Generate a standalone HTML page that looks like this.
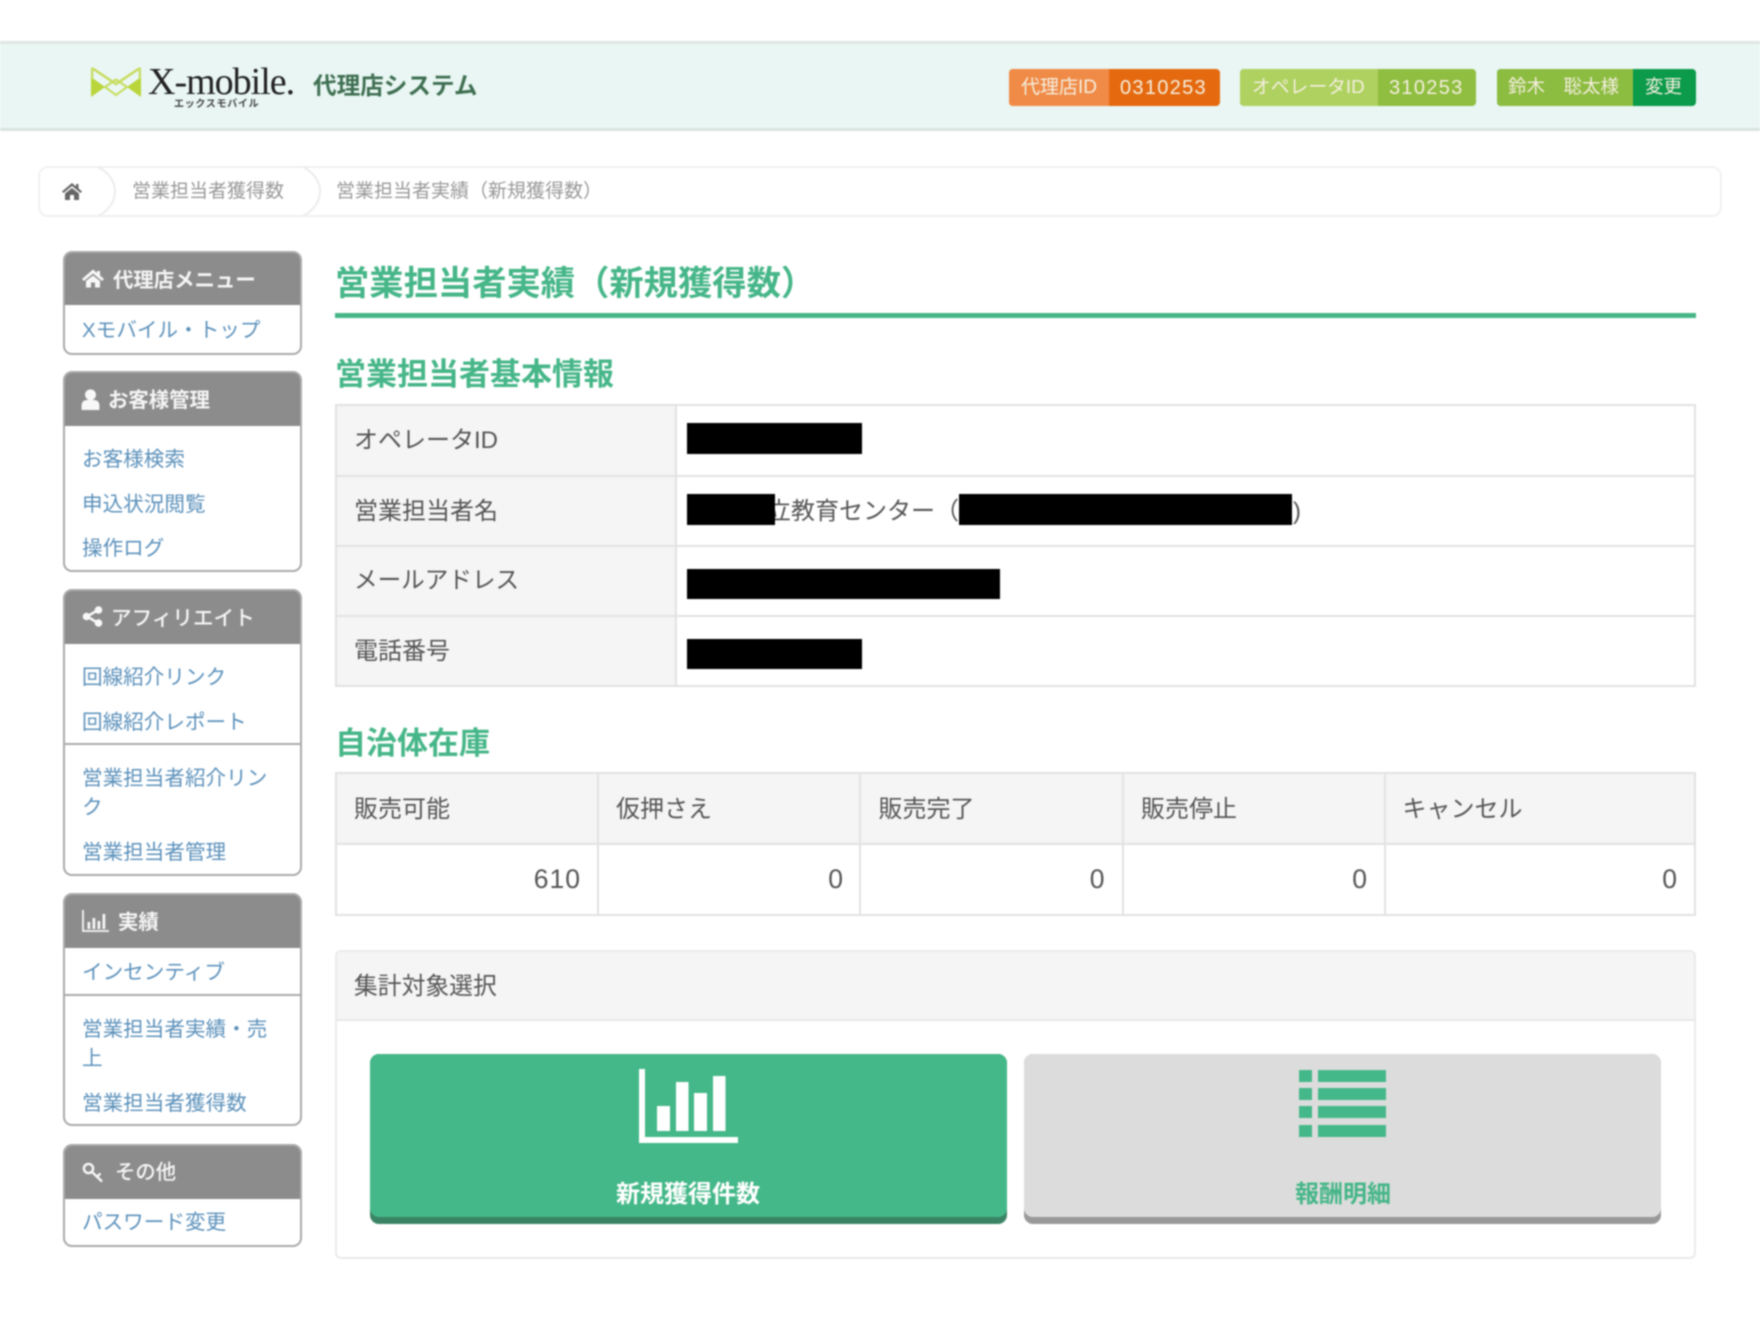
<!DOCTYPE html>
<html lang="ja"><head><meta charset="utf-8"><title>営業担当者実績（新規獲得数）</title>
<style>
html,body{margin:0;padding:0;background:#fff}
body{position:relative;width:1760px;height:1320px;overflow:hidden;font-family:"Liberation Sans","Noto Sans CJK JP",sans-serif;color:#555}
#w{position:absolute;left:0;top:0;width:1760px;height:1320px;filter:blur(.7px)}
.a{position:absolute;box-sizing:border-box}
.t{position:absolute;white-space:nowrap;line-height:1}
.box{position:absolute;left:63px;width:239px;box-sizing:border-box;border:2px solid #aaa;border-radius:9px;background:#fff;overflow:hidden}
.hd{position:absolute;left:-2px;top:-2px;width:239px;background:#8c8c8c}
.div{position:absolute;left:63px;width:239px;height:2px;background:#aaa}
.m{font-size:20.6px;color:#5c91bb;left:82px}
.mh{font-size:20.4px;color:#f5f5f5;font-weight:700}
.th{position:absolute;background:#f5f5f5}
.ln{position:absolute;background:#e2e2e2}
.c{font-size:24px;color:#555}
.n{font-size:26.500px;color:#555;letter-spacing:1px;text-align:right;font-family:"Liberation Sans",sans-serif}
.k{position:absolute;background:#000}
.g{color:#46b688;font-weight:700}
.bd{position:absolute;top:69px;height:37px;border-radius:4px}
.bt{font-size:19px;color:#f5efdf;top:78px}
</style></head><body><div id="w">

<!-- header -->
<div class="a" style="left:0;top:41px;width:1760px;height:90px;background:#e9f6f3;border-top:3px solid #dfe6e4;border-bottom:3px solid #dbe3e1"></div>
<svg class="a" style="left:91px;top:67px" width="50" height="30" viewBox="0 0 50 30">
<path d="M0 10L14 20L0 30Z" fill="#b9d53a"/><path d="M50 10L36 20L50 30Z" fill="#b9d53a"/>
<path d="M1 1L25 17L49 1M1 1V12M49 1V12" stroke="#c6dc5a" stroke-width="2.400" fill="none"/>
<path d="M14 20L25 12.500L36 20L25 28Z" stroke="#c6dc5a" stroke-width="2" fill="none"/>
</svg>
<div class="t" style="left:148px;top:63px;font:38px/1 'Liberation Serif',serif;letter-spacing:-1px;color:#222">X-mobile.</div>
<div class="t" style="left:174px;top:100px;font-size:10px;font-weight:700;color:#444;letter-spacing:.7px">エックスモバイル</div>
<div class="t" style="left:313px;top:76px;font-size:23.600px;font-weight:700;color:#3f6f52">代理店システム</div>

<div class="bd" style="left:1009px;width:211px;background:#e5690f"></div>
<div class="bd" style="left:1009px;width:100px;background:#f08b47;border-radius:4px 0 0 4px"></div>
<div class="t bt" style="left:1021px">代理店ID</div>
<div class="t bt" style="left:1120px;letter-spacing:1.300px;font-size:20px">0310253</div>
<div class="bd" style="left:1240px;width:236px;background:#8fbe40"></div>
<div class="bd" style="left:1240px;width:138px;background:#aed160;border-radius:4px 0 0 4px"></div>
<div class="t bt" style="left:1252px;font-size:18.800px">オペレータID</div>
<div class="t bt" style="left:1389px;letter-spacing:1.300px;font-size:20px">310253</div>
<div class="bd" style="left:1497px;width:199px;background:#0c9a4b"></div>
<div class="bd" style="left:1497px;width:136px;background:#8cbc40;border-radius:4px 0 0 4px"></div>
<div class="t bt" style="left:1508px;font-size:18.500px">鈴木　聡太様</div>
<div class="t bt" style="left:1645px;font-size:18.500px">変更</div>

<!-- breadcrumb -->
<div class="a" style="left:38px;top:166px;width:1684px;height:51px;border:2px solid #f1f1f1;border-radius:10px"></div>
<svg class="a" style="left:38px;top:166px" width="300" height="51" viewBox="0 0 300 51"><path d="M60 1C70 6 77 15 77 25.500C77 36 70 45 60 50" fill="none" stroke="#ececec" stroke-width="2"/><path d="M265 1C275 6 282 15 282 25.500C282 36 275 45 265 50" fill="none" stroke="#ececec" stroke-width="2"/></svg>
<svg class="a" style="left:61px;top:182px" width="22" height="18" viewBox="0 0 22 18"><path d="M11 1L1 9.500L2.500 11L11 4L19.500 11L21 9.500L17.500 6.500V2H15V4.500ZM4 11.500V18H9V13H13V18H18V11.500L11 6Z" fill="#666"/></svg>
<div class="t" style="left:132px;top:182px;font-size:19px;color:#999">営業担当者獲得数</div>
<div class="t" style="left:336px;top:182px;font-size:19px;color:#999">営業担当者実績（新規獲得数）</div>

<!-- sidebar -->
<div class="box" style="top:251px;height:104px"><div class="hd" style="height:54px"></div></div>
<div class="box" style="top:371px;height:201px"><div class="hd" style="height:55px"></div></div>
<div class="box" style="top:589px;height:287px"><div class="hd" style="height:55px"></div></div>
<div class="box" style="top:893px;height:233px"><div class="hd" style="height:55px"></div></div>
<div class="box" style="top:1144px;height:103px"><div class="hd" style="height:55px"></div></div>
<div class="div" style="top:743px"></div>
<div class="div" style="top:994px"></div>

<svg class="a" style="left:82px;top:269px" width="22" height="19" viewBox="0 0 22 18"><path d="M11 0L0 9.500L2 11.500L11 4L20 11.500L22 9.500L18 6V1.500H15V3.500ZM4 11.500V18H9V13H13V18H18V11.500L11 6Z" fill="#f8f8f8"/></svg>
<div class="t mh" style="left:113px;top:271px">代理店メニュー</div>
<div class="t m" style="top:321px">Xモバイル・トップ</div>

<svg class="a" style="left:81px;top:389px" width="19" height="21" viewBox="0 0 18 20"><circle cx="9" cy="5.500" r="5.200" fill="#f8f8f8"/><path d="M0.500 20V15Q1 10.500 6 10.500H12Q17 10.500 17.500 15V20Z" fill="#f8f8f8"/></svg>
<div class="t mh" style="left:108px;top:391px">お客様管理</div>
<div class="t m" style="top:450px">お客様検索</div>
<div class="t m" style="top:495px">申込状況閲覧</div>
<div class="t m" style="top:539px">操作ログ</div>

<svg class="a" style="left:82px;top:606px" width="21" height="21" viewBox="0 0 21 21"><path d="M16 4L5 10.500L16 17" stroke="#f8f8f8" stroke-width="2.500" fill="none"/><circle cx="16.500" cy="4" r="3.800" fill="#f8f8f8"/><circle cx="4.500" cy="10.500" r="3.800" fill="#f8f8f8"/><circle cx="16.500" cy="17" r="3.800" fill="#f8f8f8"/></svg>
<div class="t mh" style="left:111px;top:609px;font-weight:500;font-size:20.600px">アフィリエイト</div>
<div class="t m" style="top:668px">回線紹介リンク</div>
<div class="t m" style="top:712.500px">回線紹介レポート</div>
<div class="t m" style="top:769px">営業担当者紹介リン</div>
<div class="t m" style="top:798px">ク</div>
<div class="t m" style="top:843px">営業担当者管理</div>

<svg class="a" style="left:82px;top:910px" width="27" height="22" viewBox="0 0 27 22"><path d="M1 0V21H27" stroke="#f5f5f5" stroke-width="1.800" fill="none"/><path d="M5.500 12h2.800v7h-2.800zM10.500 8h2.800v11h-2.800zM15.500 11h2.800v8h-2.800zM20.500 4h2.800v15h-2.800z" fill="#f5f5f5"/></svg>
<div class="t mh" style="left:118px;top:913px">実績</div>
<div class="t m" style="top:963px">インセンティブ</div>
<div class="t m" style="top:1020px">営業担当者実績・売</div>
<div class="t m" style="top:1049px">上</div>
<div class="t m" style="top:1094px">営業担当者獲得数</div>

<svg class="a" style="left:82px;top:1160px" width="24" height="23" viewBox="0 0 24 23"><circle cx="6.500" cy="8.500" r="4.600" stroke="#f8f8f8" stroke-width="2.400" fill="none"/><path d="M10 12L20 21.500M15 16.500L18.500 13.500" stroke="#f8f8f8" stroke-width="2.400" fill="none"/></svg>
<div class="t mh" style="left:115px;top:1163px;font-weight:500">その他</div>
<div class="t m" style="top:1213px">パスワード変更</div>

<!-- main titles -->
<div class="t g" style="left:335px;top:266.500px;font-size:34.300px">営業担当者実績（新規獲得数）</div>
<div class="a" style="left:335px;top:313px;width:1361px;height:5px;background:#46b688"></div>
<div class="t g" style="left:335px;top:359px;font-size:31px">営業担当者基本情報</div>

<!-- table 1 -->
<div class="th" style="left:336px;top:405px;width:340px;height:282px"></div>
<div class="ln" style="left:335px;top:404px;width:1361px;height:2px"></div>
<div class="ln" style="left:335px;top:475px;width:1361px;height:2px"></div>
<div class="ln" style="left:335px;top:545px;width:1361px;height:2px"></div>
<div class="ln" style="left:335px;top:615px;width:1361px;height:2px"></div>
<div class="ln" style="left:335px;top:685px;width:1361px;height:2px"></div>
<div class="ln" style="left:335px;top:404px;width:2px;height:283px"></div>
<div class="ln" style="left:675px;top:404px;width:2px;height:283px"></div>
<div class="ln" style="left:1694px;top:404px;width:2px;height:283px"></div>
<div class="t c" style="left:354px;top:429px">オペレータID</div>
<div class="t c" style="left:354px;top:499.500px">営業担当者名</div>
<div class="t c" style="left:354px;top:569.500px;font-size:23.600px">メールアドレス</div>
<div class="t c" style="left:354px;top:640px">電話番号</div>
<div class="k" style="left:687px;top:423px;width:175px;height:31px"></div>
<div class="t c" style="left:767px;top:499.500px">立教育センター（</div>
<div class="k" style="left:687px;top:494px;width:88px;height:31px"></div>
<div class="k" style="left:958.500px;top:494px;width:333.500px;height:31px"></div>
<div class="t c" style="left:1293px;top:499.500px">)</div>
<div class="k" style="left:687px;top:569px;width:313px;height:30px"></div>
<div class="k" style="left:687px;top:639px;width:175px;height:30px"></div>

<div class="t g" style="left:335px;top:728px;font-size:31px">自治体在庫</div>

<!-- table 2 -->
<div class="th" style="left:336px;top:773px;width:1359px;height:71px"></div>
<div class="ln" style="left:335px;top:772px;width:1361px;height:2px"></div>
<div class="ln" style="left:335px;top:843px;width:1361px;height:2px"></div>
<div class="ln" style="left:335px;top:914px;width:1361px;height:2px"></div>
<div class="ln" style="left:335px;top:772px;width:2px;height:144px"></div>
<div class="ln" style="left:597px;top:772px;width:2px;height:144px"></div>
<div class="ln" style="left:859px;top:772px;width:2px;height:144px"></div>
<div class="ln" style="left:1122px;top:772px;width:2px;height:144px"></div>
<div class="ln" style="left:1384px;top:772px;width:2px;height:144px"></div>
<div class="ln" style="left:1694px;top:772px;width:2px;height:144px"></div>
<div class="t c" style="left:354px;top:797.500px">販売可能</div>
<div class="t c" style="left:616px;top:797.500px">仮押さえ</div>
<div class="t c" style="left:878.500px;top:797.500px">販売完了</div>
<div class="t c" style="left:1141px;top:797.500px">販売停止</div>
<div class="t c" style="left:1402.500px;top:797.500px">キャンセル</div>
<div class="t n" style="left:480px;width:101px;top:865.500px">610</div>
<div class="t n" style="left:740px;width:104px;top:865.500px">0</div>
<div class="t n" style="left:1000px;width:105.500px;top:865.500px">0</div>
<div class="t n" style="left:1260px;width:108px;top:865.500px">0</div>
<div class="t n" style="left:1570px;width:108px;top:865.500px">0</div>

<!-- panel -->
<div class="a" style="left:335px;top:950px;width:1361px;height:309px;border:2px solid #ebebeb;border-radius:6px"></div>
<div class="a" style="left:337px;top:952px;width:1357px;height:69px;background:#f5f5f5;border-bottom:2px solid #e8e8e8;border-radius:4px 4px 0 0"></div>
<div class="t" style="left:354px;top:975px;font-size:23.800px;color:#555">集計対象選択</div>

<div class="a" style="left:370px;top:1054px;width:637px;height:170px;background:#3a8465;border-radius:9px"></div>
<div class="a" style="left:370px;top:1054px;width:637px;height:163px;background:#44b888;border-radius:9px"></div>
<svg class="a" style="left:639px;top:1069px" width="99" height="75" viewBox="0 0 99 75"><path d="M0 0h6v68h93v6H0z" fill="#fff"/><path d="M18 37h13v25H18zM37 13h12.500v49H37zM55 24h13v38H55zM74 7h12.500v55H74z" fill="#fff"/></svg>
<div class="t" style="left:616px;top:1183px;font-size:24px;font-weight:700;color:#fff">新規獲得件数</div>

<div class="a" style="left:1024px;top:1054px;width:637px;height:170px;background:#999;border-radius:9px"></div>
<div class="a" style="left:1024px;top:1054px;width:637px;height:163px;background:#dcdcdc;border-radius:9px"></div>
<svg class="a" style="left:1299px;top:1069px" width="88" height="69" viewBox="0 0 88 69"><path d="M0 1h13v12H0zM19 1h68v12H19zM0 19h13v12H0zM19 19h68v12H19zM0 37h13v12H0zM19 37h68v12H19zM0 56h13v12H0zM19 56h68v12H19z" fill="#44b888"/></svg>
<div class="t" style="left:1295px;top:1183px;font-size:24px;font-weight:700;color:#46b688">報酬明細</div>

</div></body></html>
